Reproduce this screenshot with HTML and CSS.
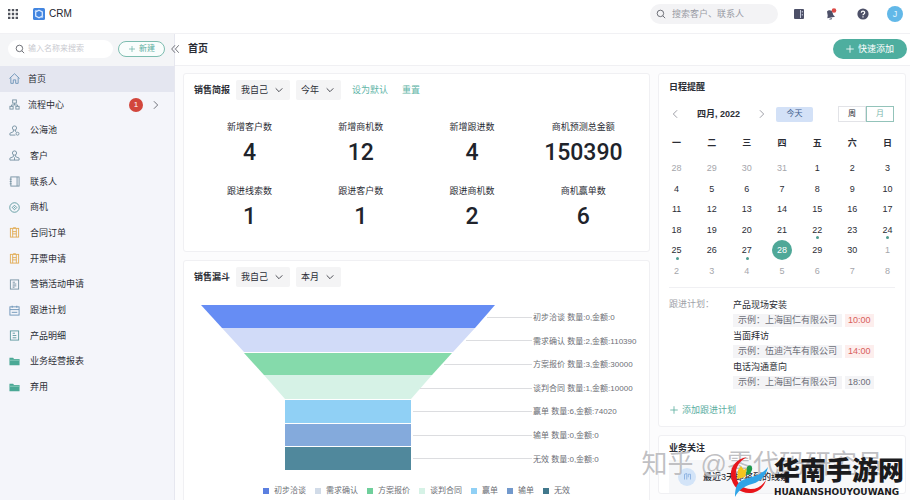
FILE: index.html
```html
<!DOCTYPE html>
<html lang="zh-CN">
<head>
    <meta charset="UTF-8">
    <meta name="viewport" content="width=device-width, initial-scale=1.0">
    <title>CRM</title>
    <link rel="stylesheet" href="styles.css">
</head>
<body>
    <svg class="sprite" aria-hidden="true">
        <symbol id="search" viewBox="0 0 12 12"><circle cx="5.3" cy="5.3" r="3.9"/><path d="M8.2 8.2 11 11"/></symbol>
        <symbol id="plus" viewBox="0 0 12 12"><path d="M6 1.5v9M1.5 6h9"/></symbol>
        <symbol id="down" viewBox="0 0 12 12"><path d="m2 4 4 4 4-4"/></symbol>
        <symbol id="left" viewBox="0 0 12 12"><path d="M8.500 1.500 4 6l4.500 4.500"/></symbol>
        <symbol id="right" viewBox="0 0 12 12"><path d="M3.500 1.500 8 6l-4.500 4.500"/></symbol>
        <symbol id="board" viewBox="0 0 12 12"><rect x="1.500" y="1.500" width="9" height="9.500"/><path d="M4 1.500V11M8 1.500V11M4 5h4M4 7.500h4M4.500 .8h3"/></symbol>
        <symbol id="folder" viewBox="0 0 12 12"><path d="M.5 2h4l1 1.200h6V10H.5z" fill="#4aa895" stroke="none"/><path d="M.5 4.600h11" stroke="#8fcdbf"/></symbol>
    </svg>

    <header class="topbar">
        <svg class="apps" viewBox="0 0 11 11"><path d="M0 0h2.600v2.600H0zM4.200 0h2.600v2.600H4.200zM8.400 0H11v2.600H8.400zM0 4.200h2.600v2.600H0zM4.200 4.200h2.600v2.600H4.200zM8.400 4.200H11v2.600H8.400zM0 8.400h2.600V11H0zM4.200 8.400h2.600V11H4.200zM8.400 8.400H11V11H8.400z"/></svg>
        <svg class="logo" viewBox="0 0 12 12"><rect width="12" height="12" rx="1.500" fill="#4285e0"/><path d="M6 2.200 9.300 4v4L6 9.800 2.700 8V4z" fill="none" stroke="#d8e8ff" stroke-width="1.300"/><path d="M1.800 3.200 3.500 2.500M10.200 8.800l-1.700.7" stroke="#d8e8ff"/></svg>
        <span class="brand">CRM</span>
        <label class="search top-search">
            <svg class="icon"><use href="#search"/></svg>
            <input type="search" placeholder="搜索客户、联系人" aria-label="搜索客户、联系人">
        </label>
        <nav class="tools">
            <svg viewBox="0 0 12 12"><rect x="1" y="1" width="10" height="10" rx="1" fill="#4d5068"/><path d="M7.500 2v8M9.300 3v1.500M9.300 6v1.500" stroke="#c5c9da"/></svg>
            <svg viewBox="0 0 12 12"><path d="M2 3.500c1.500-2 5-1.800 5.500 1l.8 2.500 1.700 1.800L2.300 10.200l.4-2.700z" fill="#4d5068"/><path d="M4.500 11.200l2.500-.5" stroke="#4d5068"/><circle cx="9" cy="2.500" r="2.300" fill="#dc4b47"/></svg>
            <svg viewBox="0 0 12 12"><circle cx="6" cy="6" r="5.600" fill="#4d5068"/><path d="M4.300 4.700c0-2.200 3.400-2.200 3.400 0C7.700 6 6 5.900 6 7.200M6 8.300v1.200" fill="none" stroke="#fff" stroke-width="1.200"/></svg>
            <span class="avatar">J</span>
        </nav>
    </header>

    <div class="app">
        <aside class="sidebar">
            <div class="side-head">
                <label class="search side-search">
                    <svg class="icon"><use href="#search"/></svg>
                    <input type="search" placeholder="输入名称来搜索" aria-label="输入名称来搜索">
                </label>
                <button class="new" type="button"><svg class="icon"><use href="#plus"/></svg>新建</button>
            </div>
            <nav class="menu">
                <a class="active" href="#"><svg class="icon blue" viewBox="0 0 12 12"><path d="M.5 6 6 .8 11.500 6M2 5v6.300h2.700V7.500h2.600v3.800H10V5"/></svg>首页</a>
                <a href="#"><svg class="icon slate" viewBox="0 0 12 12"><rect x="4" y="1" width="4" height="3.500"/><rect x="1" y="8" width="3.500" height="3"/><rect x="7.500" y="8" width="3.500" height="3"/><path d="M6 4.500v2M2.700 8V6.500h6.600V8"/></svg>流程中心<span class="badge">1</span><svg class="icon more"><use href="#right"/></svg></a>
                <a class="sub" href="#"><svg class="icon slate" viewBox="0 0 12 12"><circle cx="6" cy="3.300" r="2.300"/><path d="M4.800 5.500v1.800L1 9v2h6M7.200 5.500v1.800L8 7.700"/><circle cx="9.300" cy="9.500" r="1.600"/></svg>公海池</a>
                <a class="sub" href="#"><svg class="icon slate" viewBox="0 0 12 12"><circle cx="6" cy="3.300" r="2.300"/><path d="M4.800 5.500v1.800L1 8.800V11h10V8.800L7.200 7.300V5.500M6 8v3"/></svg>客户</a>
                <a class="sub" href="#"><svg class="icon slate" viewBox="0 0 12 12"><rect x="2" y="1" width="9" height="10"/><path d="M8.800 1v10M.8 3.500h2M.8 6h2M.8 8.500h2"/></svg>联系人</a>
                <a class="sub" href="#"><svg class="icon teal" viewBox="0 0 12 12"><circle cx="6" cy="6" r="5.200"/><path d="M6 3.500 8.500 6 6 8.500 3.500 6z"/><path d="M6 5.500v1"/></svg>商机</a>
                <a class="sub" href="#"><svg class="icon orange"><use href="#board"/></svg>合同订单</a>
                <a class="sub" href="#"><svg class="icon orange"><use href="#board"/></svg>开票申请</a>
                <a class="sub" href="#"><svg class="icon slate" viewBox="0 0 12 12"><rect x="1.500" y="1" width="9" height="10"/><path d="M4 3.500h2.500M4 5.500h4M4 7.500h4M4 9h2"/></svg>营销活动申请</a>
                <a class="sub" href="#"><svg class="icon blue" viewBox="0 0 12 12"><rect x="1" y="2" width="10" height="9"/><path d="M1 5h10M3.500.8V3M8.500.8V3M3 8h6"/></svg>跟进计划</a>
                <a class="sub" href="#"><svg class="icon teal" viewBox="0 0 12 12"><rect x="1.500" y="1" width="9" height="10"/><path d="M4 3.500h2.500M4 6h4M4 8.500h4"/></svg>产品明细</a>
                <a class="sub" href="#"><svg class="icon"><use href="#folder"/></svg>业务经营报表</a>
                <a class="sub" href="#"><svg class="icon"><use href="#folder"/></svg>弃用</a>
            </nav>
            <button class="collapse" type="button" aria-label="收起"><svg class="icon" viewBox="0 0 12 12"><path d="M6 1.500 2 6l4 4.500M10.500 1.500l-4 4.500 4 4.500"/></svg></button>
        </aside>

        <main class="page">
            <div class="page-head">
                <h1>首页</h1>
                <button class="quick" type="button"><svg class="icon"><use href="#plus"/></svg>快速添加</button>
            </div>

            <div class="columns">
                <div class="left">
                    <section class="card">
                        <div class="card-head">
                            <h2>销售简报</h2>
                            <label class="select"><select aria-label="范围"><option>我自己</option></select><svg class="icon"><use href="#down"/></svg></label>
                            <label class="select"><select aria-label="时间"><option>今年</option></select><svg class="icon"><use href="#down"/></svg></label>
                            <div class="links"><a href="#">设为默认</a><a href="#">重置</a></div>
                        </div>
                        <dl class="stats">
                            <div><dt>新增客户数</dt><dd>4</dd></div>
                            <div><dt>新增商机数</dt><dd>12</dd></div>
                            <div><dt>新增跟进数</dt><dd>4</dd></div>
                            <div><dt>商机预测总金额</dt><dd>150390</dd></div>
                            <div><dt>跟进线索数</dt><dd>1</dd></div>
                            <div><dt>跟进客户数</dt><dd>1</dd></div>
                            <div><dt>跟进商机数</dt><dd>2</dd></div>
                            <div><dt>商机赢单数</dt><dd>6</dd></div>
                        </dl>
                    </section>

                    <section class="card">
                        <div class="card-head">
                            <h2>销售漏斗</h2>
                            <label class="select"><select aria-label="范围"><option>我自己</option></select><svg class="icon"><use href="#down"/></svg></label>
                            <label class="select"><select aria-label="时间"><option>本月</option></select><svg class="icon"><use href="#down"/></svg></label>
                        </div>
                        <svg class="funnel" viewBox="0 0 445 166">
                            <path d="M7 0h294l-20 23H28z" fill="#668df4"/>
                            <path d="M28 23h253l-22 24H50z" fill="#d1dbf8"/>
                            <path d="M50 48h208l-20 22H70z" fill="#85daab"/>
                            <path d="M70 70h168l-21 24H91z" fill="#d6f2e6"/>
                            <path d="M91 95h126v23H91z" fill="#90d0f5"/>
                            <path d="M91 119h126v22H91z" fill="#84aadc"/>
                            <path d="M91 142h126v23H91z" fill="#50889c"/>
                            <path class="leader" d="M293 12.500h45M272 35.500h66M250 59.500h88M226 83.500h112M219 106.500h119M219 130.500h119M219 153.500h119"/>
                            <text x="339" y="15">初步洽谈 数量:0,金额:0</text>
                            <text x="339" y="39">需求确认 数量:2,金额:110390</text>
                            <text x="339" y="62">方案报价 数量:3,金额:30000</text>
                            <text x="339" y="86">谈判合同 数量:1,金额:10000</text>
                            <text x="339" y="109">赢单 数量:6,金额:74020</text>
                            <text x="339" y="133">输单 数量:0,金额:0</text>
                            <text x="339" y="157">无效 数量:0,金额:0</text>
                        </svg>
                        <ul class="legend">
                            <li class="s1">初步洽谈</li>
                            <li class="s2">需求确认</li>
                            <li class="s3">方案报价</li>
                            <li class="s4">谈判合同</li>
                            <li class="s5">赢单</li>
                            <li class="s6">输单</li>
                            <li class="s7">无效</li>
                        </ul>
                    </section>
                </div>

                <div class="right">
                    <section class="card schedule">
                        <h2>日程提醒</h2>
                        <div class="cal-head">
                            <button class="arrow" type="button" aria-label="上个月"><svg class="icon"><use href="#left"/></svg></button>
                            <strong>四月, 2022</strong>
                            <button class="arrow" type="button" aria-label="下个月"><svg class="icon"><use href="#right"/></svg></button>
                            <button class="today" type="button">今天</button>
                            <div class="switch"><button type="button">周</button><button class="on" type="button">月</button></div>
                        </div>
                        <table class="calendar">
                            <thead>
                                <tr><th>一</th><th>二</th><th>三</th><th>四</th><th>五</th><th>六</th><th>日</th></tr>
                            </thead>
                            <tbody>
                                <tr><td class="out">28</td><td class="out">29</td><td class="out">30</td><td class="out">31</td><td>1</td><td>2</td><td>3</td></tr>
                                <tr><td>4</td><td>5</td><td>6</td><td>7</td><td>8</td><td>9</td><td>10</td></tr>
                                <tr><td>11</td><td>12</td><td>13</td><td>14</td><td>15</td><td>16</td><td>17</td></tr>
                                <tr><td>18</td><td>19</td><td>20</td><td>21</td><td class="dot">22</td><td>23</td><td class="dot">24</td></tr>
                                <tr><td class="dot">25</td><td>26</td><td class="dot">27</td><td class="now"><span>28</span></td><td>29</td><td>30</td><td class="out">1</td></tr>
                                <tr><td class="out">2</td><td class="out">3</td><td class="out">4</td><td class="out">5</td><td class="out">6</td><td class="out">7</td><td class="out">8</td></tr>
                            </tbody>
                        </table>
                        <div class="plans">
                            <span class="plans-label">跟进计划：</span>
                            <ul>
                                <li>产品现场安装<div class="tags"><span>示例：上海国仁有限公司</span><time class="late">10:00</time></div></li>
                                <li>当面拜访<div class="tags"><span>示例：伍迪汽车有限公司</span><time class="late">14:00</time></div></li>
                                <li>电话沟通意向<div class="tags"><span>示例：上海国仁有限公司</span><time>18:00</time></div></li>
                            </ul>
                        </div>
                        <a class="add" href="#"><svg class="icon"><use href="#plus"/></svg>添加跟进计划</a>
                    </section>

                    <section class="card focus">
                        <h2>业务关注</h2>
                        <div class="notice">
                            <span class="notice-icon"><svg class="icon" viewBox="0 0 12 12"><path d="M2 10V3l3-1v8M7 3h3v7M7 3v4"/></svg></span>
                            最近3天即将到的线索
                        </div>
                    </section>
                </div>
            </div>
        </main>
    </div>

    <div class="watermark">知乎 @零代码研究员</div>
    <div class="stamp">
        <svg viewBox="0 0 40 42">
            <path d="M17 1C6 3 0 11 1 20c1 11 10 18 20 17 8-1 13-6 15-13-4 6-9 9-15 9-8 0-14-5-15-13C5 12 9 5 17 1z" fill="#e8151b"/>
            <path d="M8 14l3-4 3 4 3-2-2 9-8 2z" fill="#f5c51c"/>
            <path d="M17 11c3-3 6-1 5 3l-2 4-4 1z" fill="#1e9b4b"/>
            <path d="M38 11C29 22 20 20 11 25c-5 3-6 9-6 16 4-8 10-11 17-13 9-3 14-8 16-17z" fill="#2fa4e7"/>
        </svg>
        <div class="stamp-text"><b>华南手游网</b><span>HUANANSHOUYOUWANG</span></div>
    </div>
</body>
</html>
```
FILE: styles.css
```css
* {
    margin: 0;
    padding: 0;
    box-sizing: border-box;
}
body {
    display: flex;
    flex-direction: column;
    height: 100vh;
    overflow: hidden;
    background: #fff;
    color: #2b2d35;
    font: 9px/14px "Liberation Sans", "Noto Sans CJK SC", sans-serif;
}
button, input, select {
    border: 0;
    background: none;
    color: inherit;
    font: inherit;
    outline: 0;
    appearance: none;
}
a {
    color: inherit;
    text-decoration: none;
}
ul {
    list-style: none;
}
h1 {
    font-size: 10px;
}
h2 {
    font-size: 9px;
    line-height: 14px;
}
.sprite {
    position: absolute;
    width: 0;
    height: 0;
}
.icon {
    flex: none;
    width: 12px;
    height: 12px;
    fill: none;
    stroke: currentColor;
}

/* top bar */
.topbar {
    display: flex;
    align-items: center;
    flex: none;
    height: 34px;
    padding: 0 8px 6px;
    border-bottom: 1px solid #f1f1f4;
}
.apps {
    width: 10px;
    height: 10px;
    fill: #50535c;
}
.logo {
    width: 12px;
    height: 12px;
    margin: 0 4px 0 15px;
}
.brand {
    font-size: 10px;
    color: #22242c;
}
.search {
    display: flex;
    align-items: center;
    border-radius: 10px;
    color: #555860;
}
.search .icon {
    width: 10px;
    height: 10px;
}
.search input {
    flex: 1;
    min-width: 0;
}
.search input::placeholder {
    color: #9a9ca5;
}
.top-search {
    width: 128px;
    height: 20px;
    margin-left: auto;
    padding: 0 6px;
    gap: 6px;
    background: #f3f3f5;
}
.tools {
    display: flex;
    align-items: center;
    gap: 20px;
    margin-left: 15px;
}
.tools svg {
    width: 12px;
    height: 12px;
}
.avatar {
    width: 16px;
    height: 16px;
    margin: 0 -1px 0 -2px;
    border-radius: 50%;
    background: #62b8e8;
    color: #e4f6ff;
    line-height: 16px;
    text-align: center;
}

.app {
    display: flex;
    flex: 1;
    min-height: 0;
}

/* sidebar */
.sidebar {
    display: flex;
    flex-direction: column;
    flex: none;
    position: relative;
    width: 175px;
    border-right: 1px solid #e6e7ef;
    background: #f4f5fa;
}
.side-head {
    display: flex;
    align-items: center;
    height: 32px;
    padding: 0 9px 2px 8px;
    gap: 5px;
    background: #f4f5f7;
}
.side-search {
    flex: 1;
    min-width: 0;
    height: 18px;
    padding: 0 7px;
    gap: 3px;
    background: #fff;
    font-size: 8px;
}
.side-search input::placeholder {
    color: #c9cad0;
}
.new {
    display: flex;
    align-items: center;
    justify-content: center;
    width: 47px;
    height: 16px;
    gap: 3px;
    border: 1px solid #7dbdb0;
    border-radius: 8px;
    background: #f9fdfc;
    color: #5bae9f;
    font-size: 8px;
}
.new .icon {
    width: 8px;
    height: 8px;
}
.collapse {
    position: absolute;
    top: 9px;
    right: -6px;
    height: 12px;
    color: #555860;
}
.collapse .icon {
    width: 10px;
    height: 12px;
}
.menu {
    display: flex;
    flex-direction: column;
    flex: 1;
    padding-bottom: 100px;
}
.menu a {
    display: flex;
    align-items: center;
    flex: 1;
    padding: 0 13px 0 9px;
    gap: 8px;
}
.menu a.sub {
    gap: 10px;
}
.menu a > .icon:first-child {
    width: 11px;
    height: 11px;
}
.menu a.active {
    background: #e4e6f0;
}
.blue {
    color: #6c94b8;
}
.slate {
    color: #7793a3;
}
.teal {
    color: #5f9aa0;
}
.orange {
    color: #e2ad57;
}
.badge {
    width: 14px;
    height: 14px;
    margin-left: auto;
    border-radius: 50%;
    background: #d2463c;
    color: #fff;
    font-size: 8px;
    text-align: center;
}
.menu .more {
    width: 10px;
    height: 10px;
    color: #555860;
}

/* page */
.page {
    display: flex;
    flex-direction: column;
    flex: 1;
    min-width: 0;
    background: #fcfcfd;
}
.page-head {
    display: flex;
    align-items: center;
    justify-content: space-between;
    flex: none;
    height: 32px;
    padding: 0 3px 2px 13px;
    border-bottom: 1px solid #f0f0f3;
    background: #fff;
}
.quick {
    display: flex;
    align-items: center;
    height: 20px;
    padding: 0 13px 0 12px;
    gap: 3px;
    border-radius: 10px;
    background: #4eae9f;
    color: #fff;
}
.quick .icon {
    width: 10px;
    height: 10px;
}
.columns {
    display: flex;
    flex: 1;
    min-height: 0;
    padding: 7px 4px 0 8px;
    gap: 8px;
}
.left {
    flex: 1;
    min-width: 0;
}
.right {
    width: 248px;
}
.card {
    margin-bottom: 8px;
    padding: 6px 10px 0;
    border: 1px solid #f0f0f3;
    border-radius: 3px;
    background: #fff;
}
.card-head {
    display: flex;
    align-items: center;
    gap: 6px;
}
.select {
    position: relative;
    height: 20px;
    border-radius: 2px;
    background: #f4f4f5;
}
.select select {
    height: 20px;
    padding: 0 21px 0 5px;
}
.select .icon {
    position: absolute;
    top: 5px;
    right: 6px;
    width: 10px;
    height: 10px;
    pointer-events: none;
}
.links {
    display: flex;
    gap: 14px;
    margin-left: 5px;
    color: #62b5a7;
}
.stats {
    display: grid;
    grid-template-columns: repeat(4, 1fr);
    padding: 20px 0 3px;
    text-align: center;
}
.stats > div {
    height: 64px;
}
.stats dd {
    margin-top: 5px;
    color: #20232b;
    font: 500 23px/28px Roboto, "Liberation Sans", sans-serif;
}

/* funnel */
.funnel {
    display: block;
    width: 100%;
    margin-top: 18px;
    font-size: 8px;
    fill: #6d6f76;
}
.leader {
    stroke: #dcdde0;
}
.legend {
    display: flex;
    justify-content: center;
    padding: 13px 0;
    gap: 9px;
    color: #6d6f76;
    font-size: 8px;
}
.legend li {
    display: flex;
    align-items: center;
    gap: 5px;
}
.legend li::before {
    content: "";
    width: 6px;
    height: 6px;
    background: currentColor;
}
.s1::before {
    color: #5b7fe0;
}
.s2::before {
    color: #d1dbe8;
}
.s3::before {
    color: #6fcf9b;
}
.s4::before {
    color: #d6f2e6;
}
.s5::before {
    color: #90d0f5;
}
.s6::before {
    color: #7299cc;
}
.s7::before {
    color: #41788c;
}

/* schedule */
.schedule {
    padding: 6px 0 9px;
}
.schedule h2 {
    padding: 0 10px;
}
.cal-head {
    display: flex;
    align-items: center;
    height: 16px;
    margin-top: 12px;
    padding: 0 11px;
}
.arrow {
    height: 10px;
    color: #8a8c94;
}
.arrow .icon {
    display: block;
    width: 10px;
    height: 10px;
}
.cal-head strong {
    margin: 0 17px;
}
.today {
    width: 37px;
    height: 15px;
    margin-left: 9px;
    border-radius: 2px;
    background: #d3e1f7;
    color: #3d5c8c;
    font-size: 8px;
}
.switch {
    display: flex;
    margin-left: auto;
}
.switch button {
    width: 28px;
    height: 16px;
    border: 1px solid #e2e3e7;
    font-size: 8px;
    line-height: 14px;
}
.switch .on {
    border-color: #93c3ba;
    color: #7cb8ad;
}
.calendar {
    width: 100%;
    height: 153px;
    margin-top: 6px;
    border-collapse: collapse;
    table-layout: fixed;
    line-height: 12px;
    text-align: center;
}
.calendar th {
    height: 30px;
}
.calendar td {
    position: relative;
}
.calendar .out {
    color: #a5a6ab;
}
.dot::after {
    content: "";
    position: absolute;
    bottom: 1px;
    left: 50%;
    width: 3px;
    height: 3px;
    margin-left: -1px;
    border-radius: 50%;
    background: #4e9c8f;
}
.now span {
    display: block;
    width: 20px;
    height: 20px;
    margin: -4px auto;
    border-radius: 50%;
    background: #4fa898;
    color: #fff;
    line-height: 20px;
}
.plans {
    display: flex;
    margin: 6px 10px 0;
    padding-top: 9px;
    border-top: 1px solid #f0f0f3;
}
.plans-label {
    width: 64px;
    color: #a0a2a8;
}
.plans li {
    line-height: 16px;
}
.tags {
    display: flex;
    align-items: center;
    height: 15px;
    gap: 3px;
    color: #6c6e78;
    line-height: 13px;
}
.tags span {
    padding: 0 5px;
    background: #f4f4f6;
}
.tags time {
    padding: 0 3px;
    background: #f4f4f6;
}
.tags .late {
    background: #fdeeed;
    color: #d8605c;
}
.add {
    display: flex;
    align-items: center;
    margin: 13px 10px 0;
    gap: 3px;
    color: #5bae9f;
}
.add .icon {
    width: 10px;
    height: 10px;
}

/* focus */
.focus {
    padding-top: 5px;
}
.notice {
    display: flex;
    align-items: center;
    height: 33px;
    margin-top: 5px;
    padding: 0 9px;
    gap: 7px;
    background: #f6f7f9;
    font-weight: 500;
}
.notice-icon {
    display: grid;
    place-items: center;
    width: 18px;
    height: 18px;
    border-radius: 50%;
    background: #d3e4f8;
    color: #7ba6dc;
}
.notice-icon .icon {
    width: 9px;
    height: 9px;
}

/* marks over the page */
.watermark {
    position: absolute;
    right: 27px;
    bottom: 20px;
    color: rgba(150, 150, 155, 0.6);
    font-size: 26px;
    line-height: 32px;
    text-shadow: 0 0 1px #fff;
}
.stamp {
    display: flex;
    position: absolute;
    right: 6px;
    bottom: 2px;
    gap: 4px;
    color: #1b1b1d;
}
.stamp svg {
    width: 40px;
    height: 42px;
}
.stamp-text b {
    display: block;
    font-size: 26px;
    font-weight: 900;
    line-height: 30px;
}
.stamp-text span {
    display: block;
    font: bold 9px/12px "DejaVu Sans", sans-serif;
}
```
